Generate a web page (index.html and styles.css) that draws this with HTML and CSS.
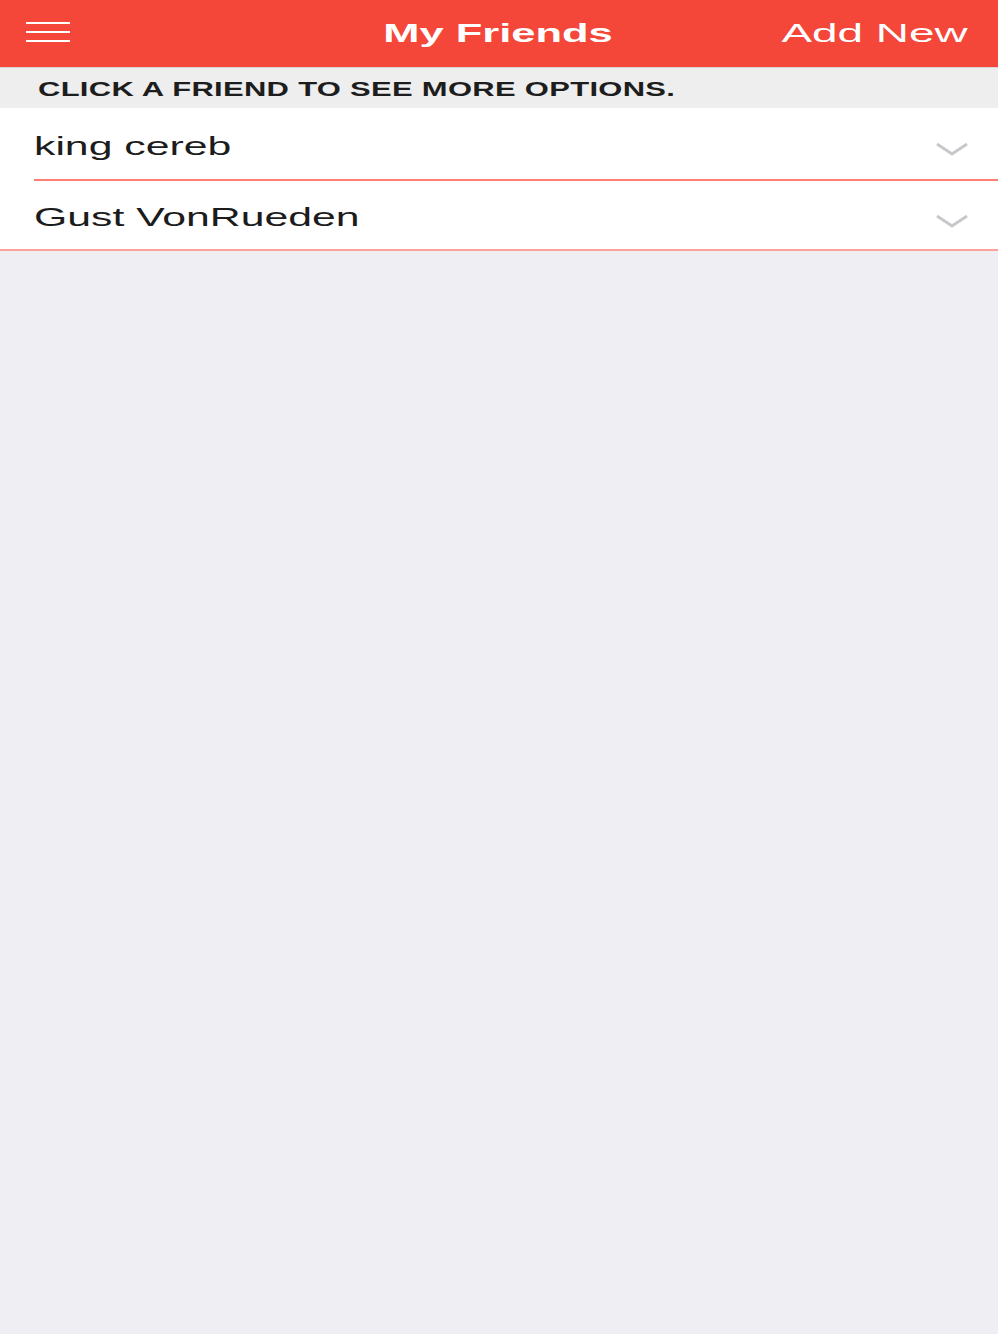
FILE: index.html
```html
<!DOCTYPE html>
<html lang="en">
<head>
  <meta charset="UTF-8">
  <title>My Friends</title>
  <meta name="viewport" content="width=device-width, initial-scale=1">
  <link rel="stylesheet" href="styles.css">
</head>
<body>
  <div class="app">
    <header class="topbar">
      <button class="menu-btn" aria-label="Menu">
        <span></span><span></span><span></span>
      </button>
      <h1 class="title"><span>My Friends</span></h1>
      <a class="add-new" href="#"><span>Add New</span></a>
    </header>
    <div class="hint"><span>CLICK A FRIEND TO SEE MORE OPTIONS.</span></div>
    <ul class="friends">
      <li class="friend">
        <span class="name">king cereb</span>
        <svg class="chevron" width="34" height="14" viewBox="0 0 34 14"><path d="M2 2 L17 12 L32 2" fill="none" stroke="#c8c7cc" stroke-width="3"/></svg>
      </li>
      <li class="friend last">
        <span class="name">Gust VonRueden</span>
        <svg class="chevron" width="34" height="14" viewBox="0 0 34 14"><path d="M2 2 L17 12 L32 2" fill="none" stroke="#c8c7cc" stroke-width="3"/></svg>
      </li>
    </ul>
    <div class="filler"></div>
  </div>
</body>
</html>
```

FILE: styles.css
```css
html, body {
  margin: 0;
  padding: 0;
  background: #fff;
}
body {
  font-family: 'Liberation Sans', Arial, sans-serif;
  color: #1c1c1c;
}
.app {
  width: 998px;
  min-height: 1334px;
  display: flex;
  flex-direction: column;
  background: #efeef3;
}
.topbar {
  height: 67px;
  background: #f44639;
  border-bottom: 1px solid #d9d3d3;
  display: flex;
  align-items: center;
  position: relative;
}
.menu-btn {
  margin-left: 26px;
  width: 44px;
  height: 20px;
  padding: 0;
  border: none;
  background: none;
  display: flex;
  flex-direction: column;
  justify-content: space-between;
  margin-top: -4px;
}
.menu-btn span {
  display: block;
  height: 2px;
  background: #fff;
}
.title {
  flex: 1;
  margin: 0;
  text-align: center;
  font-size: 26.5px;
  font-weight: bold;
  color: #fff;
  padding-left: 66px;
}
.title span {
  display: inline-block;
  transform: scaleX(1.64);
}
.add-new {
  color: #fff;
  text-decoration: none;
  font-size: 26.5px;
  margin-right: 30px;
}
.add-new span {
  display: inline-block;
  transform: scaleX(1.73);
  transform-origin: right center;
}
.hint {
  height: 40px;
  background: #eeeeee;
  display: flex;
  align-items: center;
  padding-left: 38px;
  font-size: 20.5px;
  font-weight: bold;
  color: #1d1d1d;
}
.hint span {
  display: inline-block;
  transform: scaleX(1.51);
  transform-origin: left center;
  letter-spacing: 0.2px;
  padding-top: 1px;
}
.friends {
  list-style: none;
  margin: 0;
  padding: 0;
  background: #fff;
}
.friend {
  height: 71px;
  margin-left: 34px;
  border-bottom: 2px solid #ff7d73;
  display: flex;
  align-items: center;
  justify-content: space-between;
}
.friend.last {
  margin-left: 0;
  padding-left: 34px;
  height: 68px;
  border-bottom-color: #ffa099;
}
.name {
  display: inline-block;
  font-size: 25px;
  transform: scaleX(1.71);
  transform-origin: left center;
  margin-top: 5px;
}
.chevron {
  margin-right: 29px;
  margin-top: 11px;
}
.filler {
  flex: 1;
  background: #efeef3;
}
```
